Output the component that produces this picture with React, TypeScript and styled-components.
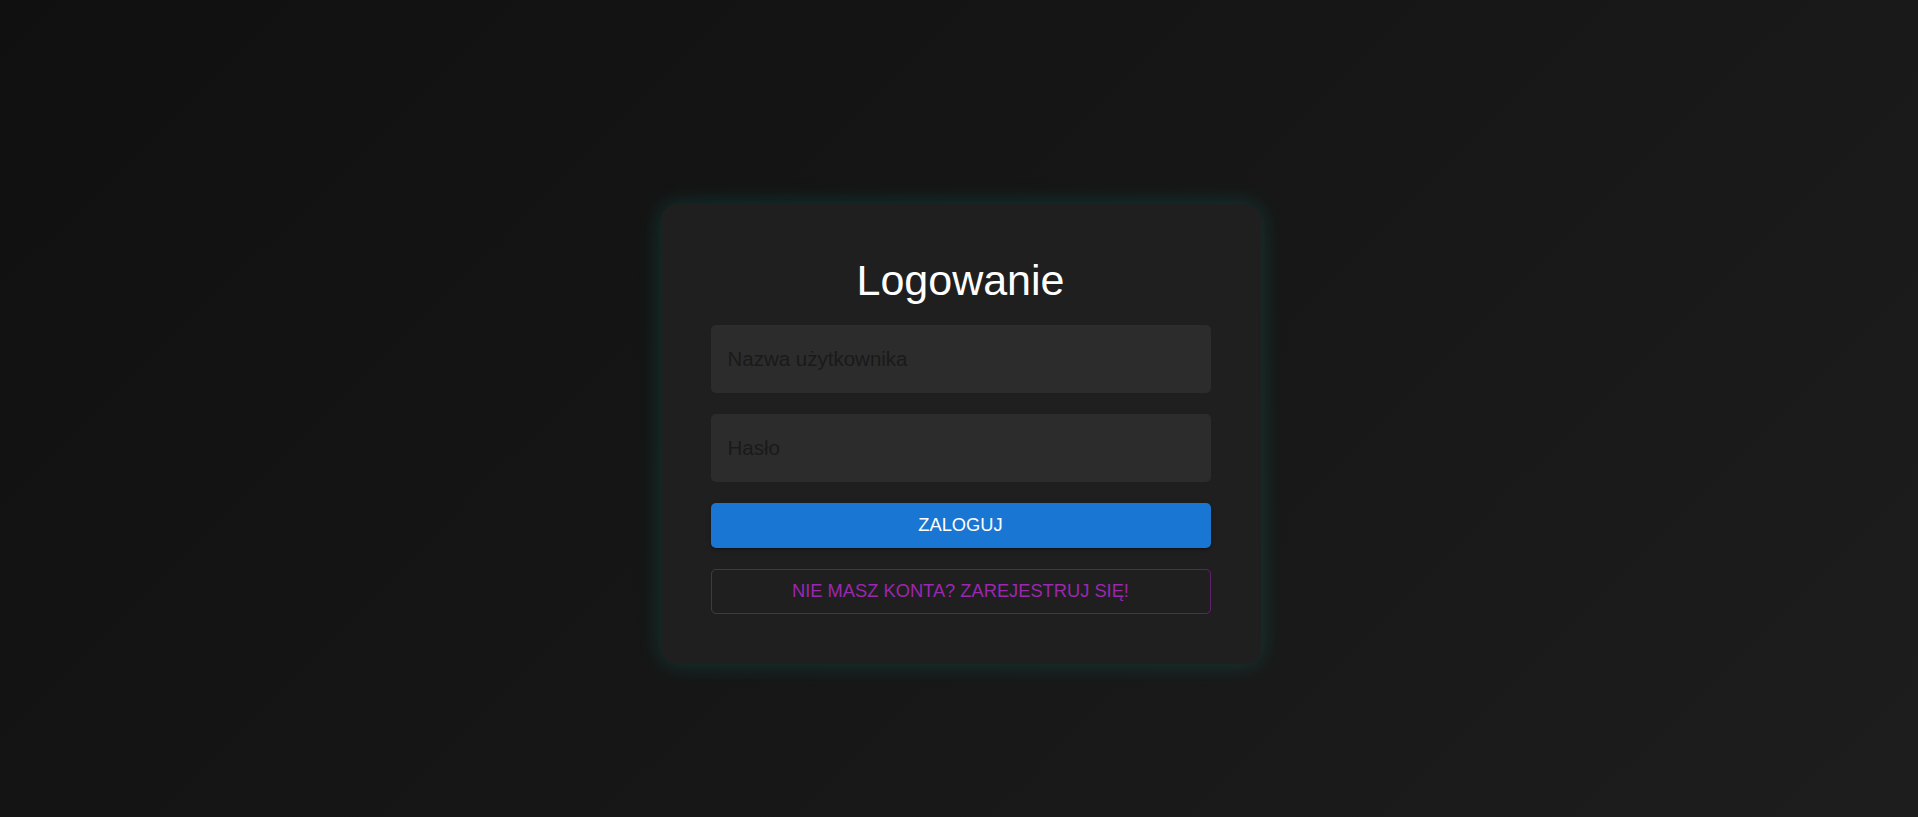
import React from "react";
import styled, { createGlobalStyle } from "styled-components";

const GlobalStyle = createGlobalStyle`
  * { box-sizing: border-box; }
  html, body { margin: 0; padding: 0; height: 100%; }
  body {
    font-family: "Liberation Sans", Arial, sans-serif;
    background: linear-gradient(135deg, #101010 0%, #161616 50%, #1d1d1d 100%);
    min-height: 100vh;
  }
  #root { min-height: 100vh; }
`;

const Page = styled.main`
  min-height: 100vh;
  padding: 51px 0 0 3px;
  display: flex;
  align-items: center;
  justify-content: center;
`;

const Card = styled.form`
  width: 600px;
  padding: 50px;
  background: #1f1f1f;
  border-radius: 16px;
  box-shadow: 0 0 22px rgba(0, 200, 180, 0.2);
  display: flex;
  flex-direction: column;
  gap: 21px;
`;

const Title = styled.h1`
  margin: 1px 0 -3px;
  font-size: 43px;
  line-height: 1.2;
  font-weight: 400;
  color: #ffffff;
  text-align: center;
`;

const Input = styled.input`
  width: 100%;
  height: 68px;
  padding: 0 17px;
  border: none;
  border-radius: 5px;
  background: #2c2c2c;
  color: #e0e0e0;
  font-family: "Liberation Sans", Arial, sans-serif;
  font-size: 20.5px;
  outline: none;
  &::placeholder {
    color: #1a1a1a;
  }
`;

const Button = styled.button<{ $variant: "contained" | "outlined" }>`
  width: 100%;
  height: 45px;
  border-radius: 5px;
  font-family: "Liberation Sans", Arial, sans-serif;
  font-size: 18.3px;
  text-transform: uppercase;
  cursor: pointer;
  ${(p) =>
    p.$variant === "contained"
      ? `
    background: #1976d2;
    color: #ffffff;
    border: none;
    box-shadow: 0 3px 1px -2px rgba(0,0,0,0.2), 0 2px 2px 0 rgba(0,0,0,0.14), 0 1px 5px 0 rgba(0,0,0,0.12);
  `
      : `
    background: transparent;
    color: #9c27b0;
    border: 1px solid rgba(156, 39, 176, 0.5);
  `}
`;

export default function App() {
  return (
    <>
      <GlobalStyle />
      <Page>
        <Card onSubmit={(e) => e.preventDefault()}>
          <Title>Logowanie</Title>
          <Input type="text" placeholder="Nazwa użytkownika" />
          <Input type="password" placeholder="Hasło" />
          <Button type="submit" $variant="contained">
            Zaloguj
          </Button>
          <Button type="button" $variant="outlined">
            Nie masz konta? Zarejestruj się!
          </Button>
        </Card>
      </Page>
    </>
  );
}
